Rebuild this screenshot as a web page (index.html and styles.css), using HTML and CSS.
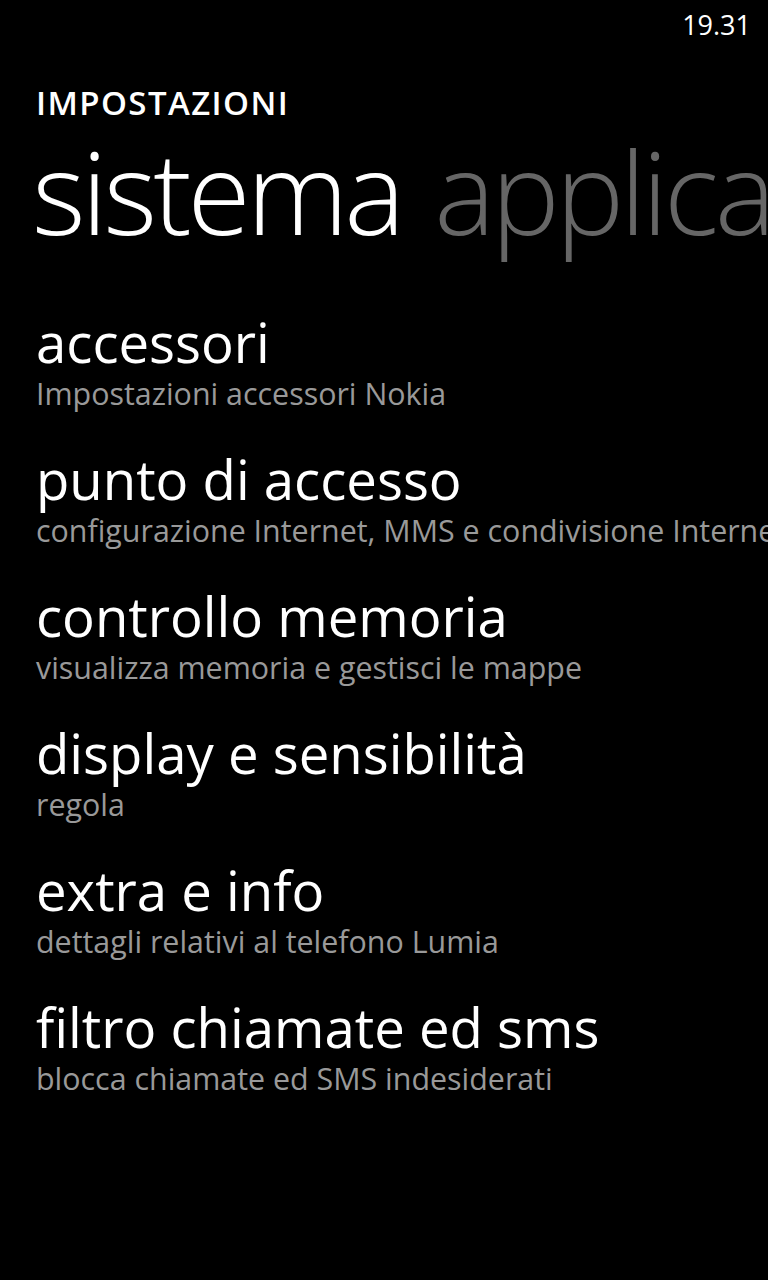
FILE: index.html
```html
<!DOCTYPE html>
<html lang="it">
<head>
    <meta charset="utf-8">
    <meta name="viewport" content="width=device-width, initial-scale=1">
    <title>Impostazioni</title>
    <link rel="stylesheet" href="styles.css">
</head>
<body>

    <div class="status-bar">
        <span class="clock">19.31</span>
    </div>

    <header class="pivot-header">
        <h1 class="app-title">IMPOSTAZIONI</h1>
        <div class="pivot-tabs">
            <span class="pivot-tab active">sistema</span>
            <span class="pivot-tab">applicazioni</span>
        </div>
    </header>

    <ul class="settings-list">
        <li class="settings-item">
            <div class="item-title">accessori</div>
            <div class="item-subtitle">Impostazioni accessori Nokia</div>
        </li>
        <li class="settings-item">
            <div class="item-title">punto di accesso</div>
            <div class="item-subtitle">configurazione Internet, MMS e condivisione Internet</div>
        </li>
        <li class="settings-item">
            <div class="item-title">controllo memoria</div>
            <div class="item-subtitle">visualizza memoria e gestisci le mappe</div>
        </li>
        <li class="settings-item">
            <div class="item-title">display e sensibilità</div>
            <div class="item-subtitle">regola</div>
        </li>
        <li class="settings-item">
            <div class="item-title">extra e info</div>
            <div class="item-subtitle">dettagli relativi al telefono Lumia</div>
        </li>
        <li class="settings-item">
            <div class="item-title">filtro chiamate ed sms</div>
            <div class="item-subtitle">blocca chiamate ed SMS indesiderati</div>
        </li>
    </ul>

</body>
</html>
```

FILE: styles.css
```css
* {
    margin: 0;
    padding: 0;
    box-sizing: border-box;
}

html,
body {
    background-color: #000;
}

body {
    width: 768px;
    height: 1280px;
    font-family: 'Open Sans', 'Noto Sans', sans-serif;
    color: #fff;
    overflow: hidden;
    white-space: nowrap;
}

/* status bar with the clock */
.status-bar {
    display: flex;
    justify-content: flex-end;
    height: 50px;
    padding-right: 17px;
    line-height: 50px;
}

.clock {
    font-size: 27px;
    font-weight: 400;
}

.pivot-header {
    padding-left: 36px;
}

.app-title {
    margin-top: 33px;
    font-size: 33px;
    line-height: 40px;
    font-weight: 600;
    letter-spacing: 1.4px;
}

.pivot-tabs {
    display: flex;
    gap: 33px;
    margin-top: 8px;
    margin-left: -4px;
}

.pivot-tab {
    font-size: 115px;
    line-height: 120px;
    font-weight: 300;
    letter-spacing: -4px;
    color: #666;
}

.pivot-tab.active {
    color: #fff;
}

.settings-list {
    list-style: none;
    margin-top: 63px;
    padding-left: 36px;
}

.settings-item {
    margin-bottom: 39px;
}

.item-title {
    font-size: 54.5px;
    line-height: 56px;
    font-weight: 400;
}

.item-subtitle {
    margin-top: 6px;
    font-size: 30.4px;
    line-height: 36px;
    color: #999;
}
```
